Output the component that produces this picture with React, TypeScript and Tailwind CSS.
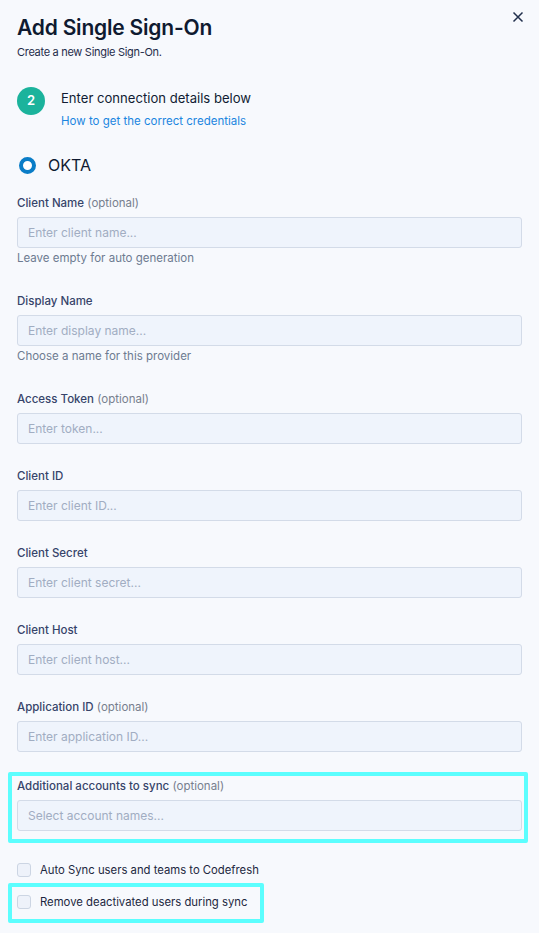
import React from 'react';

type FieldProps = {
    label: string;
    optional?: boolean;
    placeholder: string;
    helper?: string;
};

const Field: React.FC<FieldProps> = ({ label, optional, placeholder, helper }) => (
    <div className="flex flex-col">
        <label className="text-[11.5px] leading-4 font-medium text-[#36446a]">
            {label}
            {optional && <span className="font-normal text-[#777f8e]"> (optional)</span>}
        </label>
        <input
            className="mt-[6px] h-[31px] w-full rounded-[3px] border border-[#d3dbe8] bg-[#eff4fc] px-[10px] text-[12px] text-[#1c2740] placeholder:text-[#a1adc2] outline-none"
            placeholder={placeholder}
        />
        {helper && <div className="mt-0 text-[11.5px] leading-[21px] text-[#6d7b91]">{helper}</div>}
    </div>
);

const Checkbox: React.FC<{ label: string }> = ({ label }) => (
    <label className="flex h-5 items-center gap-[9px] text-[11.3px] text-[#1c2740]">
        <span className="h-[14px] w-[14px] rounded-[3px] border border-[#ccd5e3] bg-[#eef2fa]" />
        {label}
    </label>
);

export default function App() {
    return (
        <div className="min-h-[933px] w-[539px] bg-[#f7f9fd] px-[17px] pt-3 font-['Inter',sans-serif] text-[#0f1a30]">
            <button className="absolute right-[13px] top-[9px] p-0.5 text-[#22304d]">
                <svg width="12" height="12" viewBox="0 0 12 12" fill="none" stroke="currentColor" strokeWidth="1.5">
                    <path d="M1.5 1.5l9 9M10.5 1.5l-9 9" />
                </svg>
            </button>

            <h1 className="text-[21px] leading-8 font-semibold tracking-[-0.2px]">Add Single Sign-On</h1>
            <p className="text-[11px] leading-4 tracking-[-0.3px] text-[#1f2c4a]">Create a new Single Sign-On.</p>

            <div className="mt-[27px] flex items-start gap-4">
                <div className="flex h-[28px] w-[28px] items-center justify-center rounded-full bg-[#1bb39c] text-[13px] font-semibold text-white">
                    2
                </div>
                <div className="flex flex-col">
                    <div className="mt-[1px] text-[13.1px] leading-5 text-[#111c33]">Enter connection details below</div>
                    <a className="mt-[5px] text-[11.5px] leading-4 text-[#1b86e0]">How to get the correct credentials</a>
                </div>
            </div>

            <div className="mt-[26px] flex h-5 items-center gap-[12px] pl-[2px]">
                <span className="h-[17px] w-[17px] rounded-full border-[4px] border-[#0a7dc7] bg-white" />
                <span className="text-[16px] text-[#0f1a30]">OKTA</span>
            </div>

            <div className="mt-[20px] flex flex-col gap-6">
                <Field label="Client Name" optional placeholder="Enter client name..." helper="Leave empty for auto generation" />
                <Field label="Display Name" placeholder="Enter display name..." helper="Choose a name for this provider" />
                <Field label="Access Token" optional placeholder="Enter token..." />
                <Field label="Client ID" placeholder="Enter client ID..." />
                <Field label="Client Secret" placeholder="Enter client secret..." />
                <Field label="Client Host" placeholder="Enter client host..." />
                <Field label="Application ID" optional placeholder="Enter application ID..." />
            </div>

            <div className="-ml-[9px] -mr-[6px] mt-[20px] rounded-[2px] border-4 border-[#5cfefe] pb-[8px] pl-[5px] pr-[2px] pt-[2px]">
                <Field label="Additional accounts to sync" optional placeholder="Select account names..." />
            </div>

            <div className="mt-[17px]">
                <Checkbox label="Auto Sync users and teams to Codefresh" />
            </div>
            <div className="-ml-[9px] mt-[3px] w-fit rounded-[2px] border-4 border-[#5cfefe] pb-[7px] pl-[5px] pr-[13px] pt-[5px]">
                <Checkbox label="Remove deactivated users during sync" />
            </div>
        </div>
    );
}
